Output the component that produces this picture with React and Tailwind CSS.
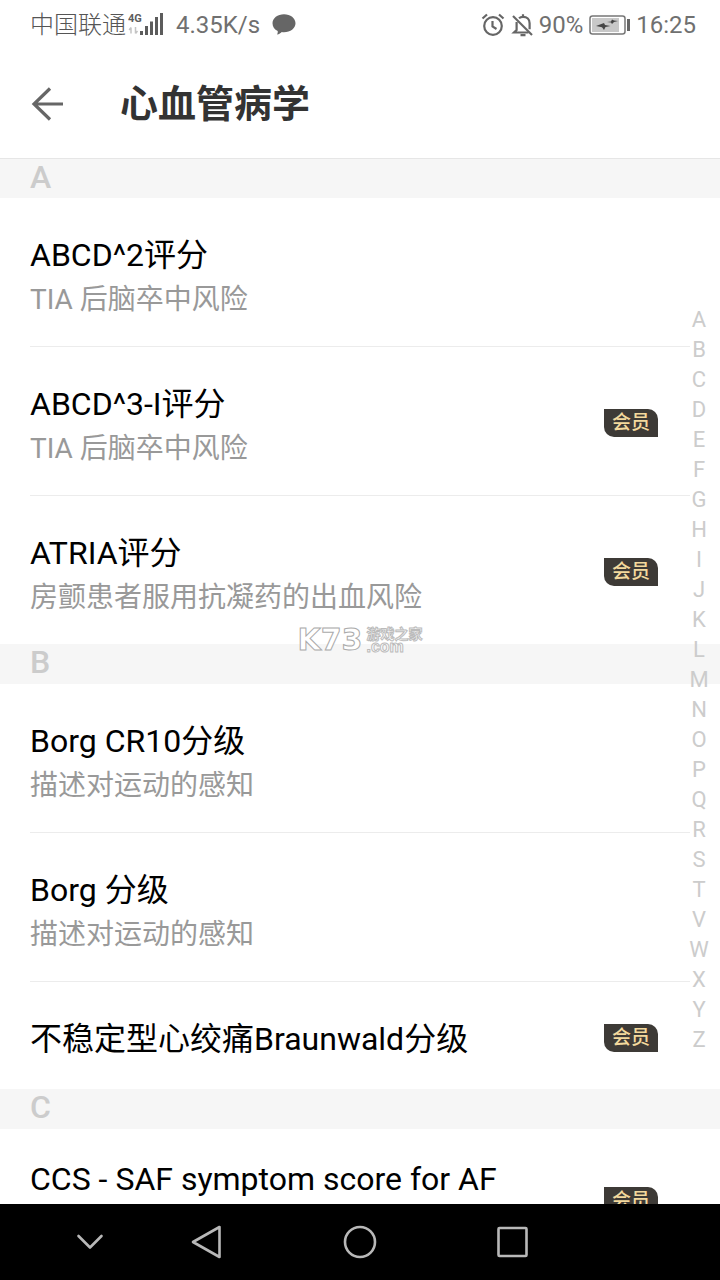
const sections = [
  {
    letter: 'A',
    items: [
      { title: 'ABCD^2评分', note: 'TIA 后脑卒中风险' },
      { title: 'ABCD^3-I评分', note: 'TIA 后脑卒中风险', vip: true },
      { title: 'ATRIA评分', note: '房颤患者服用抗凝药的出血风险', vip: true },
    ],
  },
  {
    letter: 'B',
    items: [
      { title: 'Borg CR10分级', note: '描述对运动的感知' },
      { title: 'Borg 分级', note: '描述对运动的感知' },
      { title: '不稳定型心绞痛Braunwald分级', vip: true, space: 'pt-[35px] pb-7' },
    ],
  },
  {
    letter: 'C',
    items: [{ title: 'CCS - SAF symptom score for AF', vip: true, space: 'pt-7 pb-[68px]' }],
  },
];

const letters = 'ABCDEFGHIJKLMNOPQRSTVWXYZ'.split('');

function Signal() {
  return (
    <svg className="ml-0.5 h-7 w-9" viewBox="0 0 36 28" fill="#5c5c5c" aria-hidden="true">
      <text x="0" y="11" fontSize="11" fontWeight="700">4G</text>
      <path d="M3 16.500v6M3 16.500 1.200 19M7.500 16v6.500M7.500 22.500 9.500 20" stroke="#c4c4c4" strokeWidth="1.500" fill="none" />
      <rect x="12" y="20" width="3" height="4" />
      <rect x="17" y="15" width="3" height="9" />
      <rect x="22" y="10.500" width="3" height="13.500" />
      <rect x="27" y="6" width="3" height="18" />
      <rect x="32" y="2" width="3" height="22" />
    </svg>
  );
}

function StatusBar() {
  return (
    <div className="flex h-[50px] shrink-0 items-center pr-6 pl-[30px] text-2xl text-[#707070]">
      <span className="font-light text-[#555]">中国联通</span>
      <Signal />
      <span className="ml-3">4.35K/s</span>
      <svg className="ml-3 h-6 w-6" viewBox="0 0 24 24" fill="#666" aria-hidden="true">
        <path d="M12 1.200c6.400 0 11.500 3.900 11.500 9s-5.100 9-11.500 9c-.8 0-1.500-.1-2.200-.2-1 1.200-2.600 2.200-4.800 2.500.7-1 .9-2.300.7-3.500C2.600 16.600.5 13.600.5 10.200c0-5.100 5.100-9 11.500-9z" />
      </svg>
      <svg className="ml-auto h-6 w-6" viewBox="0 0 24 24" fill="none" stroke="#666" strokeWidth="2.200" aria-hidden="true">
        <circle cx="12" cy="13" r="8.800" />
        <path d="M11.500 8v5.500l4 2.500" />
        <path d="M1.500 5.500 6 1.500M22.500 5.500 18 1.500" />
      </svg>
      <svg className="ml-1.5 h-6 w-6" viewBox="0 0 24 24" fill="none" stroke="#666" strokeWidth="2.200" aria-hidden="true">
        <path d="M2 3l19 19" />
        <path d="M5.600 9v8L3 19.500h14.500" />
        <path d="M8 5.200C9 4.300 10.400 3.800 12 3.800c4 0 6.600 2.800 6.600 6.400v6" />
        <path d="M12 1.200v2.500M9.500 22.200h5" />
      </svg>
      <span className="ml-1">90%</span>
      <svg className="ml-1.5 h-6 w-[41px]" viewBox="0 0 41 24" aria-hidden="true">
        <rect x="1" y="3" width="35" height="18" rx="2.500" fill="#fff" stroke="#777" strokeWidth="1.500" />
        <rect x="3" y="5" width="27" height="14" fill="#c8c8c8" />
        <path d="M7 13l8-3 1 2 5.500 1-5 1-1.500 3-2-2.800zM18 9l4-.5 1-2 2 1 4 .5-4 1-2 2-1-1.500z" fill="#444" />
        <rect x="38" y="6" width="3" height="12" fill="#666" />
      </svg>
      <span className="ml-1.5">16:25</span>
    </div>
  );
}

function Item({ item, last }) {
  return (
    <li className={last ? '' : 'border-b border-[#ececec]'}>
      <a href="#item" className={`flex items-center ${item.space || 'pt-[35px] pb-[23px]'} relative`}>
        <div className="min-w-0 flex-1">
          <h3 className="truncate text-[32px] leading-[44px] text-black">{item.title}</h3>
          {item.note && <p className="truncate text-[28px] leading-[46px] text-[#999]">{item.note}</p>}
        </div>
        {item.vip && (
          <span className="absolute inset-y-0 right-8 flex items-center pt-1">
            <span className="flex h-7 w-[54px] items-center justify-center rounded-tr-[10px] rounded-bl-[10px] bg-[#3d3a36] text-[19px] leading-[30px] font-medium text-[#f3d99d]">
              会员
            </span>
          </span>
        )}
      </a>
    </li>
  );
}

function Watermark() {
  return (
    <div
      className="pointer-events-none absolute inset-x-0 top-[466px] flex items-center justify-center gap-1 text-white [-webkit-text-stroke:1px_#aaa]"
      aria-hidden="true"
    >
      <span className="font-['DejaVu_Sans'] text-[30px] leading-8 font-bold">K73</span>
      <span className="flex flex-col font-bold [-webkit-text-stroke:1px_#bbb]">
        <span className="text-sm leading-[14px]">游戏之家</span>
        <span className="font-['Liberation_Sans'] text-base leading-3">.com</span>
      </span>
    </div>
  );
}

function NavButton({ label, className = '', children }) {
  return (
    <button type="button" aria-label={label} className={className}>
      <svg className="h-9 w-9" viewBox="0 0 36 36" fill="none" stroke="#b8b8b8" strokeWidth="2.600" strokeLinejoin="round" strokeLinecap="round">
        {children}
      </svg>
    </button>
  );
}

export default function App() {
  return (
    <div className="flex h-screen flex-col overflow-hidden bg-white font-[Roboto,'Noto_Sans_CJK_SC',sans-serif]">
      <StatusBar />
      <header className="flex h-[108px] shrink-0 items-center gap-[54px] pl-[30px]">
        <button type="button" aria-label="返回">
          <svg className="h-9 w-9" viewBox="0 0 36 36" fill="none" stroke="#666" strokeWidth="3.200">
            <path d="M33 18H4M20 2.500 4 18l16 15.500" />
          </svg>
        </button>
        <h1 className="text-[38px] leading-[54px] font-bold text-[#333]">心血管病学</h1>
      </header>
      <div className="relative min-h-0 flex-1">
        <main className="h-full overflow-y-auto [scrollbar-width:none]">
          {sections.map((s, i) => (
            <section key={s.letter}>
              <h2
                className={`h-10 bg-[#f6f6f6] pl-[30px] text-[32px] leading-9 font-medium text-[#ccc] ${i === 0 ? 'border-t border-[#e6e6e6]' : ''}`}
              >
                {s.letter}
              </h2>
              <ul className="mx-[30px]">
                {s.items.map((item, n) => (
                  <Item key={item.title} item={item} last={n === s.items.length - 1} />
                ))}
              </ul>
            </section>
          ))}
        </main>
        <nav className="absolute top-[147px] right-1.5 flex w-[30px] flex-col text-center text-[22px] leading-[30px] text-[#ccc]" aria-label="索引">
          {letters.map((l) => (
            <a key={l} href={`#${l}`}>{l}</a>
          ))}
        </nav>
        <Watermark />
      </div>
      <footer className="flex h-[76px] shrink-0 items-center justify-center gap-[117px] bg-black">
        <NavButton label="收起" className="-mr-9">
          <path d="M6.500 12 18 23.500 29.500 12" />
        </NavButton>
        <NavButton label="后退">
          <path d="M30.500 3v30L4 18z" />
        </NavButton>
        <NavButton label="主页">
          <circle cx="18" cy="18" r="15" />
        </NavButton>
        <NavButton label="最近">
          <rect x="3.500" y="4" width="28" height="28" rx="1" />
        </NavButton>
        <span className="-ml-9 w-9" />
      </footer>
    </div>
  );
}
